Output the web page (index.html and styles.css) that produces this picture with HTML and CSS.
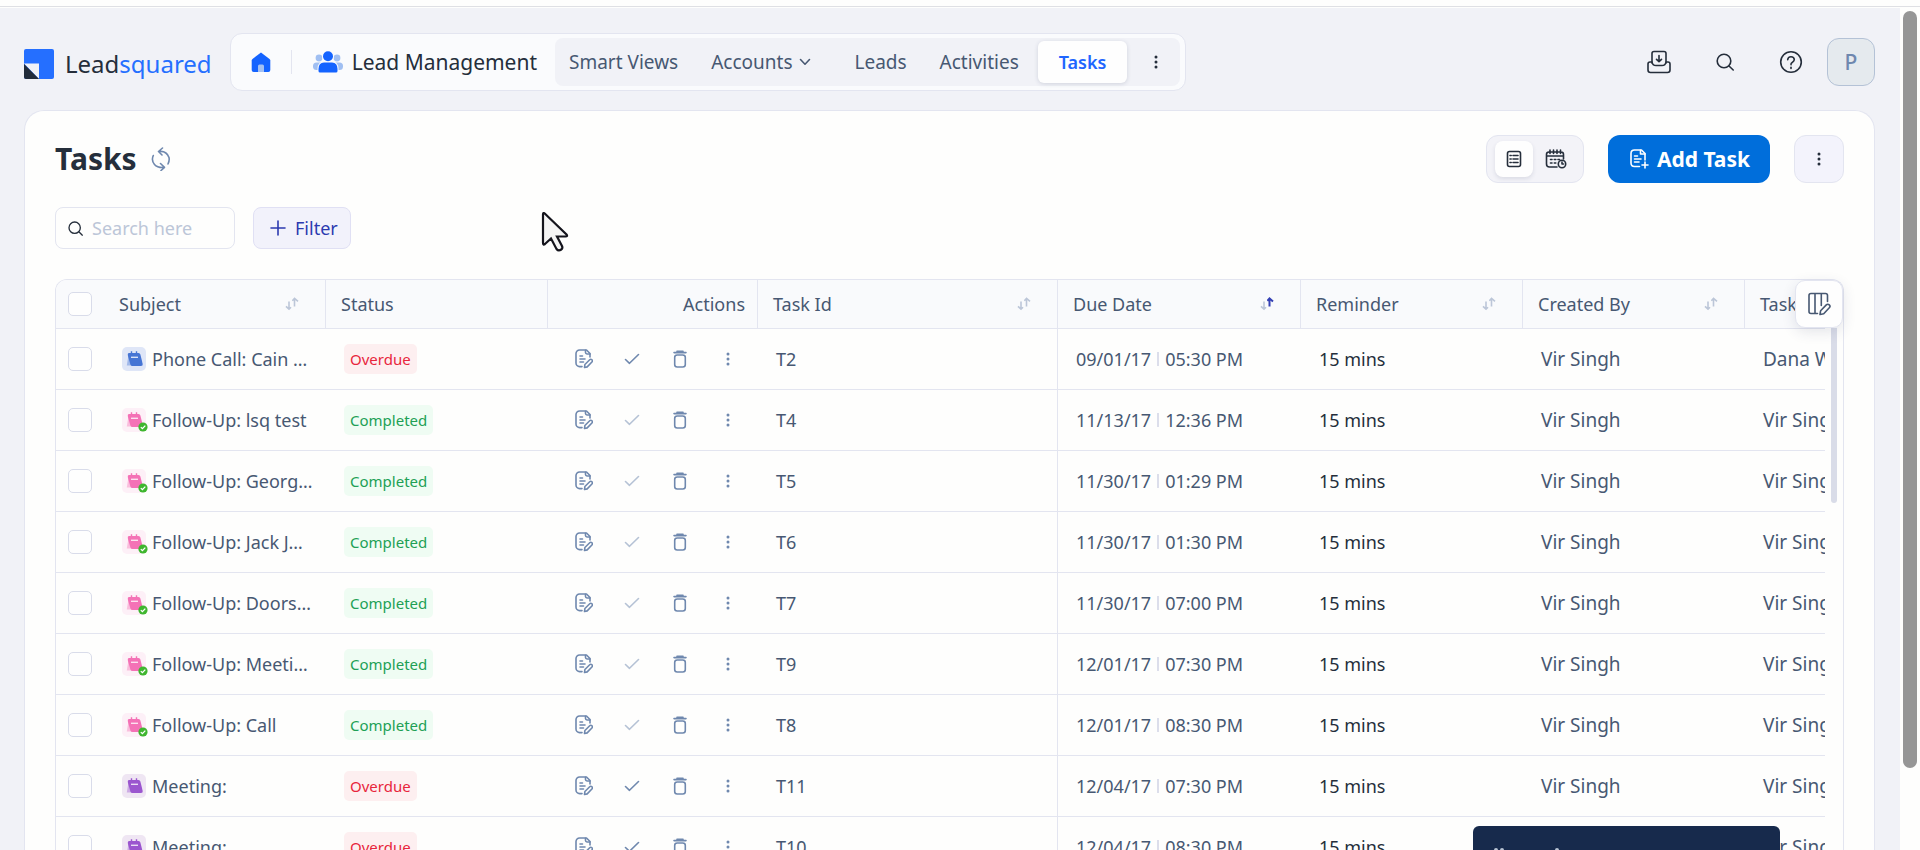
FILE: index.html
```
<!DOCTYPE html>
<html lang="en">
<head>
  <meta charset="UTF-8" />
  <meta name="viewport" content="width=device-width, initial-scale=1" />
  <title>Tasks - Leadsquared</title>
  <link rel="stylesheet" href="styles.css">
</head>
<body>
  <svg class="sprite" aria-hidden="true">
    <symbol id="i-dots" viewBox="0 0 4 14"><circle cx="2" cy="2" r="1.5"/><circle cx="2" cy="7" r="1.5"/><circle cx="2" cy="12" r="1.5"/></symbol>
    <symbol id="i-search" viewBox="0 0 18 18"><circle cx="8" cy="8" r="6.8"/><path d="M13 13l4.2 4"/></symbol>
    <symbol id="i-edit" viewBox="0 0 18 20"><path d="M7 17.6H4.600A3.600 3.600 0 0 1 1 14V4.600A3.600 3.600 0 0 1 4.600 1H11.500L15 4.500V8"/><path d="M10.500 1.200V3.500A1.600 1.600 0 0 0 12 5H15M5 7H7.500M5 10H10M5 13H8.500"/><path d="M9.500 18.500l.4-3 4.800-4.700a1.500 1.500 0 0 1 2.200 2.200l-4.700 4.900z"/></symbol>
    <symbol id="i-check" viewBox="0 0 16 12"><path d="M1.500 6.500L5.500 10.300 14.500 1.500"/></symbol>
    <symbol id="i-trash" viewBox="0 0 14 18"><rect x="1.700" y="5" width="10.600" height="12" rx="2.500"/><path d="M1 2.600H13M4 1.400H10"/></symbol>
    <symbol id="i-cal" viewBox="0 0 24 24"><path class="shade" d="M6.500 8L4.800 18.500H12Z"/><path class="fill" d="M7 6H16.500Q18 6 18.400 7.500L20.700 17Q21 19 19 19H10.500Q9 19 8.400 17.500L6 9Q5.300 6 7 6Z"/><path class="pins" d="M9.500 4.300V7.500M14.500 4.300V7.500"/><path class="slit" d="M9 10.300H16"/></symbol>
    <symbol id="i-done" viewBox="0 0 10 10"><circle cx="5" cy="5" r="4.600" fill="#3fb62f"/><path d="M2.800 5.100L4.400 6.600 7.300 3.600" fill="none" stroke="#fff" stroke-width="1.300"/></symbol>
    <symbol id="i-down" viewBox="0 0 7 14"><path d="M4 4.500V12M1 9.300L4 12.200 6 10.200"/></symbol>
    <symbol id="i-up" viewBox="0 0 7 14"><path d="M2.500 9.500V1.500M.3 3.800L2.500 1.400 6 4.400"/></symbol>
  </svg>

  <div class="topline"></div>
  <div class="window">
    <div class="app">
      <header class="topbar">
        <a class="logo" href="#">
          <svg width="30" height="30" viewBox="0 0 30 30"><rect width="30" height="30" rx="2" fill="#256fff"/><path d="M0 14.500H15V30Z" fill="#f1f2f7"/><path d="M0 15L15 30H2Q0 30 0 28Z" fill="#222c3b"/></svg>
          <span>Lead<b>squared</b></span>
        </a>
        <nav class="nav">
          <a class="home" href="#" aria-label="Home">
            <svg width="20" height="20" viewBox="0 0 20 20"><path d="M10 0.500L18.500 7Q19.300 7.700 19.300 8.600V18Q19.300 20 17.300 20H2.700Q.7 20 .7 18V8.600Q.7 7.700 1.500 7Z" fill="#1463ff"/><path d="M7 20V14Q7 12.500 8.500 12.500H11.500Q13 12.500 13 14V20Z" fill="#a3c0f2"/></svg>
          </a>
          <a class="module" href="#">
            <svg width="30" height="22" viewBox="0 0 30 22"><g fill="#a0bff2"><circle cx="6" cy="7" r="3.400"/><circle cx="24" cy="7" r="3.400"/><rect x="0" y="11.500" width="10" height="7.500" rx="3.500"/><rect x="20" y="11.500" width="10" height="7.500" rx="3.500"/></g><circle cx="15" cy="5.300" r="6" fill="#fafbfd"/><path d="M4.500 20V18Q4.500 10.500 11 10.500H19Q25.500 10.500 25.500 18V20Z" fill="#fafbfd"/><circle cx="15" cy="5.300" r="5" fill="#1463ff"/><path d="M5.500 18Q5.500 11.500 11 11.500H19Q24.500 11.500 24.500 18V20Q24.500 21.500 23 21.500H7Q5.500 21.500 5.500 20Z" fill="#1463ff"/></svg>
            Lead Management
          </a>
          <div class="tabs">
            <a class="tab" href="#">Smart Views</a>
            <a class="tab" href="#">Accounts <svg class="chevron line" width="12" height="8" viewBox="0 0 12 8"><path d="M1.500 1.500L6 6.200 10.500 1.500"/></svg></a>
            <a class="tab" href="#">Leads</a>
            <a class="tab" href="#">Activities</a>
            <a class="tab active" href="#">Tasks</a>
            <button class="nav-more" aria-label="More"><svg class="dots" width="4" height="14"><use href="#i-dots"/></svg></button>
          </div>
        </nav>
        <div class="tools">
          <button class="tool" aria-label="Downloads"><svg class="line" width="24" height="24" viewBox="0 0 24 24"><path d="M5 13V3.500Q5 1.500 7 1.500H17Q19 1.500 19 3.500V13"/><path d="M5 12H3Q1 12 1 14V20Q1 22.500 3.500 22.500H20.500Q23 22.500 23 20V14Q23 12 21 12H19Q18.500 15.500 15 15.500H9Q5.500 15.500 5 12Z"/><path d="M12 5.500V11.500M9.500 9.300L12 11.700 14.500 9.300"/></svg></button>
          <button class="tool" aria-label="Search"><svg class="line" width="18" height="18"><use href="#i-search"/></svg></button>
          <button class="tool" aria-label="Help"><svg class="line" width="24" height="24" viewBox="0 0 24 24"><circle cx="12" cy="12" r="10.300"/><path d="M8.700 9.800Q8.900 6.700 12 6.700T15.300 9.600Q15.300 11.200 13.500 12.200T12 14.700"/><path d="M12 17.300V18.500"/></svg></button>
          <button class="avatar">P</button>
        </div>
      </header>

      <main class="card">
        <div class="title-row">
          <h1>Tasks</h1>
          <button class="refresh" aria-label="Refresh"><svg class="line" width="20" height="24" viewBox="0 0 20 24"><path d="M3.500 17.500A8.500 8.500 0 0 1 2.300 8.500M8 4.500Q15.500 3.500 18 10.500 18.700 13.500 17 17M11.500 1L7.500 4.500 11 8M3.500 17.500Q6.500 21 13 20.500M9.500 16.500L13.500 20.300 10 23.500"/></svg></button>
          <div class="view-switch">
            <button class="view on" aria-label="List view"><svg class="line" width="16" height="18" viewBox="0 0 16 18"><rect x="1.500" y="1.500" width="13" height="15" rx="2"/><path d="M4 5.500H5.200M7 5.500H12M4 9H5.200M7 9H12M4 12.500H5.200M7 12.500H12"/></svg></button>
            <button class="view" aria-label="Calendar view"><svg class="line" width="22" height="20" viewBox="0 0 22 20"><path d="M12 18H4.500Q1.500 18 1.500 15V5.500Q1.500 3 4 3H16Q18.500 3 18.500 5.500V10M1.500 7H18.500M5 1V4.500M8.500 1V4.500M12 1V4.500M15.500 1V4.500"/><path d="M5.500 10.500H7M9.300 10.500H10.800M13 10.500H14.500M5.500 14H7M9.300 14H10.800"/><circle cx="17" cy="15" r="3.700"/><path d="M17 13V15H18.500"/></svg></button>
          </div>
          <button class="add-task"><svg class="line" width="19" height="20" viewBox="0 0 19 20"><path d="M9.500 17.500H4.500Q1 17.500 1 14V4.500Q1 1 4.500 1H11.500L15 4.500V11"/><path d="M10.500 1.200V5H15M4.500 7H7.500M4.500 10H11M4.500 13H9M15 13V19M12 16H18"/></svg>Add Task</button>
          <button class="more" aria-label="More actions"><svg class="dots" width="4" height="14"><use href="#i-dots"/></svg></button>
        </div>

        <div class="filters">
          <label class="search">
            <svg class="line" width="15" height="15"><use href="#i-search"/></svg>
            <input type="text" placeholder="Search here" aria-label="Search here" />
          </label>
          <button class="filter"><svg class="line" width="16" height="16" viewBox="0 0 16 16"><path d="M8 1V15M1 8H15"/></svg>Filter</button>
        </div>

        <div class="grid">
          <div class="grid-view">
            <table>
              <colgroup>
                <col class="c-check"><col class="c-mid"><col class="c-mid"><col class="c-actions"><col class="c-id"><col class="c-due"><col class="c-mid"><col class="c-mid"><col class="c-mid">
              </colgroup>
              <thead>
                <tr>
                  <th class="pick"><input type="checkbox" aria-label="Select all" /></th>
                  <th><div class="th">Subject <span class="sort"><svg width="7" height="14"><use href="#i-down"/></svg><svg width="7" height="14"><use href="#i-up"/></svg></span></div></th>
                  <th>Status</th>
                  <th class="right">Actions</th>
                  <th><div class="th">Task Id <span class="sort"><svg width="7" height="14"><use href="#i-down"/></svg><svg width="7" height="14"><use href="#i-up"/></svg></span></div></th>
                  <th><div class="th">Due Date <span class="sort asc"><svg width="7" height="14"><use href="#i-down"/></svg><svg width="7" height="14"><use href="#i-up"/></svg></span></div></th>
                  <th><div class="th">Reminder <span class="sort"><svg width="7" height="14"><use href="#i-down"/></svg><svg width="7" height="14"><use href="#i-up"/></svg></span></div></th>
                  <th><div class="th">Created By <span class="sort"><svg width="7" height="14"><use href="#i-down"/></svg><svg width="7" height="14"><use href="#i-up"/></svg></span></div></th>
                  <th>Task Owner</th>
                </tr>
              </thead>
              <tbody id="rows"></tbody>
            </table>
          </div>
          <div class="gutter"><div class="gutter-thumb"></div></div>
          <button class="columns" aria-label="Edit columns"><svg class="line" width="24" height="24" viewBox="0 0 24 24"><path d="M10.500 21.500H4Q2 21.500 2 19.500V3.500Q2 1.500 4 1.500H18.500Q20.500 1.500 20.500 3.500V9.500M8 1.500V21.500M14.300 1.500V13.500"/><path d="M13 22.500L13.600 18.800 19.300 12.900A2 2 0 0 1 22.300 15.800L16.700 21.800Z"/></svg></button>
        </div>
      </main>
    </div>
    <div class="page-scroll"><div class="page-thumb"></div></div>
  </div>

  <div class="toast">
    <svg width="76" height="20" viewBox="0 0 76 20" fill="#b9c3d3"><rect x="1" y="0" width="4" height="14" rx="2"/><rect x="7" y="0" width="4" height="14" rx="2"/><rect x="62" y="0" width="4" height="14" rx="2"/></svg>
  </div>
  <svg class="pointer" width="28" height="40" viewBox="0 0 28 40"><path d="M2 2.500V31Q2 33.500 4 32L10 26.500 15.500 37Q17.500 39.500 20.300 37.500 22 36.500 21 34L16 24.500H24.500Q27 24.500 25.500 22.500L4 1.800Q2 0 2 2.500Z"/></svg>

  <script>
    const tasks = [
      ["Phone Call: Cain Smith", "call", "Overdue", "T2", "09/01/17", "05:30 PM", "Dana Walsh"],
      ["Follow-Up: lsq test", "follow", "Completed", "T4", "11/13/17", "12:36 PM", "Vir Singh"],
      ["Follow-Up: George King", "follow", "Completed", "T5", "11/30/17", "01:29 PM", "Vir Singh"],
      ["Follow-Up: Jack JONES", "follow", "Completed", "T6", "11/30/17", "01:30 PM", "Vir Singh"],
      ["Follow-Up: Doorstep", "follow", "Completed", "T7", "11/30/17", "07:00 PM", "Vir Singh"],
      ["Follow-Up: Meeting", "follow", "Completed", "T9", "12/01/17", "07:30 PM", "Vir Singh"],
      ["Follow-Up: Call", "follow", "Completed", "T8", "12/01/17", "08:30 PM", "Vir Singh"],
      ["Meeting:", "meeting", "Overdue", "T11", "12/04/17", "07:30 PM", "Vir Singh"],
      ["Meeting:", "meeting", "Overdue", "T10", "12/04/17", "08:30 PM", "Vir Singh"]
    ];

    document.getElementById("rows").innerHTML = tasks.map(([subject, type, status, id, date, time, owner]) => {
      const done = status === "Completed";
      return `<tr>
        <td class="pick"><input type="checkbox" aria-label="Select ${id}" /></td>
        <td><div class="subject">
          <span class="type ${type}"><svg width="24" height="24"><use href="#i-cal"/></svg>${done ? '<svg class="done" width="10" height="10"><use href="#i-done"/></svg>' : ""}</span>
          <a href="#">${subject}</a>
        </div></td>
        <td><span class="badge ${status.toLowerCase()}">${status}</span></td>
        <td><div class="actions">
          <button aria-label="Edit"><svg class="line" width="18" height="20"><use href="#i-edit"/></svg></button>
          <button aria-label="Complete" ${done ? "disabled" : ""}><svg class="line" width="16" height="12"><use href="#i-check"/></svg></button>
          <button aria-label="Delete"><svg class="line" width="14" height="18"><use href="#i-trash"/></svg></button>
          <button aria-label="More"><svg class="dots" width="4" height="14"><use href="#i-dots"/></svg></button>
        </div></td>
        <td>${id}</td>
        <td>${date}<span class="bar"></span>${time}</td>
        <td class="dark">15 mins</td>
        <td class="person">Vir Singh</td>
        <td class="person">${owner}</td>
      </tr>`;
    }).join("");
  </script>
</body>
</html>
```
FILE: styles.css
```
:root {
  --bg: #f1f2f7;
  --line: #e3e5f0;
  --text: #475872;
  --dark: #252e3b;
  --blue: #256fff;
  --icon: #6f88ae;
  --muted: #bcc6d8;
}
* {
  box-sizing: border-box;
}
body {
  margin: 0;
  height: 100vh;
  display: flex;
  flex-direction: column;
  overflow: hidden;
  background: #fefefd;
  color: var(--text);
  font-family: "Noto Sans", sans-serif;
  font-size: 18px;
}
a {
  color: inherit;
  text-decoration: none;
}
button {
  display: flex;
  align-items: center;
  justify-content: center;
  padding: 0;
  border: none;
  background: none;
  color: inherit;
  font: inherit;
  cursor: pointer;
}
svg {
  flex: none;
}
.sprite {
  position: absolute;
  width: 0;
  height: 0;
}
.line {
  fill: none;
  stroke: currentColor;
  stroke-width: 1.6;
  stroke-linecap: round;
  stroke-linejoin: round;
}
.dots {
  fill: currentColor;
}
.topline {
  flex: none;
  height: 8px;
  padding-top: 6px;
}
.topline::before {
  content: "";
  display: block;
  height: 1px;
  background: #dfe0e4;
}
.window {
  flex: 1;
  min-height: 0;
  display: flex;
}
.app {
  flex: 1;
  min-width: 0;
  display: flex;
  flex-direction: column;
  padding: 25px 25px 0 24px;
  background: var(--bg);
}
.page-scroll {
  width: 20px;
  padding: 3px;
}
.page-thumb {
  width: 14px;
  height: 90.5%;
  border-radius: 7px;
  background: #969696;
}

/* top bar */
.topbar {
  display: flex;
  align-items: center;
  height: 58px;
  margin-bottom: 19px;
}
.logo {
  display: flex;
  align-items: center;
  gap: 11px;
  margin-right: 18px;
  padding-top: 3px;
  color: var(--dark);
  font-size: 24px;
  line-height: 30px;
}
.logo b {
  color: var(--blue);
  font-weight: 400;
}
.nav {
  display: flex;
  align-items: center;
  height: 58px;
  padding: 4px 5px 4px 20px;
  border: 1px solid var(--line);
  border-radius: 12px;
  background: #fafbfd;
}
.home {
  display: flex;
  align-items: center;
  height: 24px;
  padding-right: 20px;
  border-right: 1px solid var(--line);
}
.module {
  display: flex;
  align-items: center;
  gap: 9px;
  padding: 0 18px 0 21px;
  color: var(--dark);
  font-size: 21px;
}
.tabs {
  display: flex;
  align-items: center;
  gap: 5px;
  height: 48px;
  border-radius: 8px;
  background: var(--bg);
}
.tab {
  padding: 0 14px;
  font-size: 19px;
  line-height: 42px;
}
.tab.active {
  padding: 0 21px;
  border-radius: 6px;
  background: #fefefe;
  box-shadow: 0 1px 4px rgba(40, 50, 90, 0.16);
  color: #1f66ff;
  font-size: 18px;
  font-weight: 600;
}
.chevron {
  margin: 0 10px 3px 2px;
}
.nav-more {
  width: 48px;
  height: 42px;
  color: var(--dark);
}
.tools {
  display: flex;
  align-items: center;
  margin-left: auto;
  color: var(--dark);
}
.tool {
  width: 66px;
  height: 48px;
}
.avatar {
  width: 48px;
  height: 48px;
  margin-left: 3px;
  border: 1px solid #b4c2d6;
  border-radius: 12px;
  background: #e5eaee;
  color: var(--icon);
  font-size: 21px;
  font-weight: 500;
}

/* content card */
.card {
  flex: 1;
  min-height: 0;
  display: flex;
  flex-direction: column;
  padding: 24px 30px 0;
  border: 1px solid var(--line);
  border-bottom: none;
  border-radius: 20px 20px 0 0;
  background: #fefefd;
}
.title-row {
  display: flex;
  align-items: center;
  height: 48px;
}
h1 {
  margin: 0;
  color: var(--dark);
  font-size: 30px;
  line-height: 48px;
}
.refresh {
  margin-left: 14px;
  color: var(--icon);
}
.view-switch {
  display: flex;
  gap: 4px;
  margin-left: auto;
  padding: 5px 8px;
  border: 1px solid var(--line);
  border-radius: 12px;
  background: #f3f3f8;
  color: var(--dark);
}
.view {
  width: 38px;
  height: 36px;
  border-radius: 8px;
}
.view.on {
  background: #fefefe;
  box-shadow: 0 2px 4px rgba(40, 50, 90, 0.12);
}
.add-task {
  gap: 8px;
  height: 48px;
  margin: 0 24px;
  padding: 0 20px 0 22px;
  border-radius: 12px;
  background: #006edb;
  color: #fff;
  font-size: 21px;
  font-weight: 700;
}
.more {
  width: 50px;
  height: 48px;
  border: 1px solid var(--line);
  border-radius: 12px;
  background: #f3f3fc;
  color: var(--dark);
}
.filters {
  display: flex;
  gap: 18px;
  margin: 24px 0 30px;
}
.search {
  display: flex;
  align-items: center;
  gap: 9px;
  width: 180px;
  height: 42px;
  padding: 0 12px;
  border: 1px solid var(--line);
  border-radius: 8px;
  color: var(--dark);
}
.search input {
  flex: 1;
  min-width: 0;
  padding: 0;
  border: none;
  outline: none;
  background: none;
  color: var(--text);
  font: inherit;
}
.search input::placeholder {
  color: var(--muted);
}
.filter {
  gap: 9px;
  height: 42px;
  padding: 0 12px 0 16px;
  border: 1px solid #e0e0f4;
  border-radius: 8px;
  background: #f2f2fb;
  color: #2c3ab0;
}

/* task table */
.grid {
  position: relative;
  flex: 1;
  min-height: 0;
  display: flex;
  border: 1px solid var(--line);
  border-bottom: none;
  border-radius: 12px 12px 0 0;
}
.grid-view {
  flex: 1;
  min-width: 0;
  overflow: hidden;
  border-radius: 11px 0 0 0;
}
.gutter {
  width: 18px;
  padding: 48px 6px 0;
}
.gutter-thumb {
  height: 175px;
  border-radius: 0 0 3px 3px;
  background: #d9dce8;
}
.columns {
  position: absolute;
  top: 0;
  right: 0;
  width: 48px;
  height: 48px;
  border: 1px solid var(--line);
  border-radius: 10px;
  background: #fefefe;
  box-shadow: 0 4px 14px rgba(40, 50, 90, 0.12);
  color: var(--text);
}
table {
  width: 1911px;
  border-collapse: separate;
  border-spacing: 0;
  table-layout: fixed;
}
.c-check { width: 48px; }
.c-mid { width: 222px; }
.c-actions { width: 210px; }
.c-id { width: 300px; }
.c-due { width: 243px; }
th {
  height: 49px;
  padding: 0 12px 0 15px;
  border-right: 1px solid var(--line);
  border-bottom: 1px solid var(--line);
  background: #f9fafc;
  font-weight: 400;
  text-align: left;
}
th.right {
  text-align: right;
}
.th {
  display: flex;
  align-items: center;
  justify-content: space-between;
  padding-right: 14px;
}
td {
  height: 61px;
  padding: 0 0 0 18px;
  border-bottom: 1px solid var(--line);
  white-space: nowrap;
}
td:nth-child(5) {
  border-right: 1px solid var(--line);
}
th.pick,
td.pick {
  padding: 0 0 0 12px;
  border-right: none;
}
.pick input {
  appearance: none;
  display: block;
  width: 24px;
  height: 24px;
  margin: 0;
  border: 1px solid #d9dcea;
  border-radius: 5px;
  background: #fefefe;
}
.sort {
  display: flex;
  fill: none;
  stroke: var(--muted);
  stroke-width: 1.6;
}
.sort.asc svg:last-child {
  stroke: #3440b4;
  stroke-width: 2;
}
.subject {
  display: flex;
  align-items: center;
  gap: 6px;
  padding-right: 12px;
}
.subject a {
  overflow: hidden;
  text-overflow: ellipsis;
}
.type {
  position: relative;
  flex: none;
  width: 24px;
  height: 24px;
  border-radius: 5px;
}
.type svg {
  display: block;
  stroke-width: 1.4;
}
.type .done {
  position: absolute;
  right: -2px;
  bottom: 0;
}
.call { background: #dfe6f7; color: #4675d4; }
.follow { background: #fdf0f7; color: #f472b6; }
.meeting { background: #efe6f3; color: #9b56cf; }
.fill { fill: currentColor; }
.shade { fill: currentColor; opacity: 0.4; }
.pins { stroke: currentColor; }
.slit { stroke: #fff; opacity: 0.8; }
.badge {
  display: inline-block;
  padding: 0 6px;
  border-radius: 5px;
  font-size: 15px;
  line-height: 30px;
}
.overdue { background: #fdeff0; color: #e8263c; }
.completed { background: #effcf3; color: #21a055; }
.actions {
  display: flex;
  align-items: center;
  margin-left: -6px;
  color: var(--icon);
}
.actions button {
  width: 48px;
  height: 30px;
}
.actions button:disabled {
  opacity: 0.5;
}
.bar {
  display: inline-block;
  width: 2px;
  height: 14px;
  margin: 0 6px;
  background: #dcdeeb;
}
.dark {
  color: var(--dark);
}
.person {
  font-size: 19px;
}

.toast {
  position: fixed;
  right: 140px;
  bottom: -24px;
  width: 307px;
  height: 48px;
  padding: 22px 20px 0;
  border-radius: 6px;
  background: #172a4c;
}
.toast svg {
  display: block;
}
.pointer {
  position: fixed;
  top: 212px;
  left: 541px;
  fill: #f4f4f4;
  stroke: #14141c;
  stroke-width: 2.2;
}
```
